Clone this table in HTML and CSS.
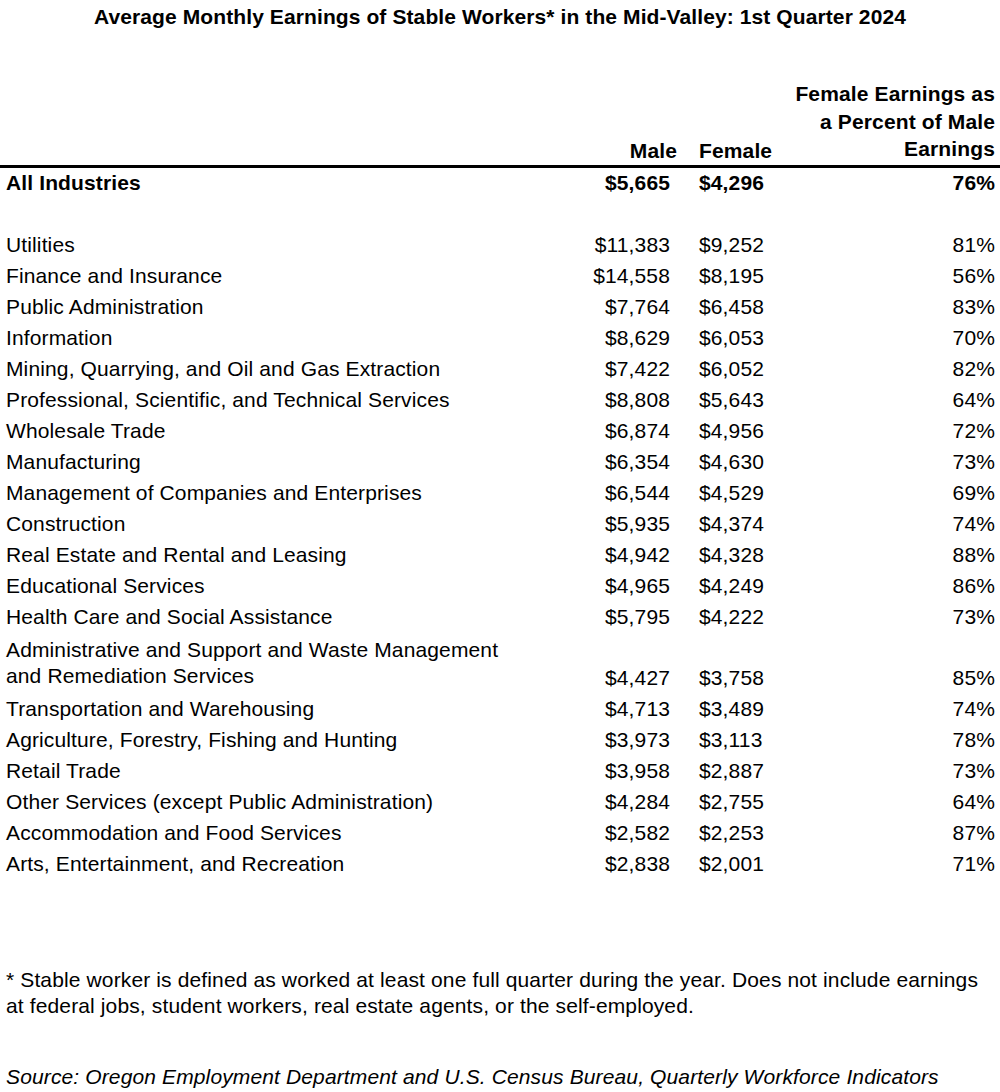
FILE: index.html
```html
<!DOCTYPE html>
<html lang="en">
<head>
<meta charset="utf-8">
<title>Average Monthly Earnings of Stable Workers</title>
<link rel="stylesheet" href="styles.css">
</head>
<body>
<h1 class="title">Average Monthly Earnings of Stable Workers* in the Mid-Valley: 1st Quarter 2024</h1>

<div class="table">
  <div class="row head">
    <div class="cell label"></div>
    <div class="cell male">Male</div>
    <div class="cell female">Female</div>
    <div class="cell pct">Female Earnings as<br>a Percent of Male<br>Earnings</div>
  </div>
  <div class="row total">
    <div class="cell label">All Industries</div>
    <div class="cell male">$5,665</div>
    <div class="cell female">$4,296</div>
    <div class="cell pct">76%</div>
  </div>
  <div class="spacer"></div>
  <div class="row"><div class="cell label">Utilities</div><div class="cell male">$11,383</div><div class="cell female">$9,252</div><div class="cell pct">81%</div></div>
  <div class="row"><div class="cell label">Finance and Insurance</div><div class="cell male">$14,558</div><div class="cell female">$8,195</div><div class="cell pct">56%</div></div>
  <div class="row"><div class="cell label">Public Administration</div><div class="cell male">$7,764</div><div class="cell female">$6,458</div><div class="cell pct">83%</div></div>
  <div class="row"><div class="cell label">Information</div><div class="cell male">$8,629</div><div class="cell female">$6,053</div><div class="cell pct">70%</div></div>
  <div class="row"><div class="cell label">Mining, Quarrying, and Oil and Gas Extraction</div><div class="cell male">$7,422</div><div class="cell female">$6,052</div><div class="cell pct">82%</div></div>
  <div class="row"><div class="cell label">Professional, Scientific, and Technical Services</div><div class="cell male">$8,808</div><div class="cell female">$5,643</div><div class="cell pct">64%</div></div>
  <div class="row"><div class="cell label">Wholesale Trade</div><div class="cell male">$6,874</div><div class="cell female">$4,956</div><div class="cell pct">72%</div></div>
  <div class="row"><div class="cell label">Manufacturing</div><div class="cell male">$6,354</div><div class="cell female">$4,630</div><div class="cell pct">73%</div></div>
  <div class="row"><div class="cell label">Management of Companies and Enterprises</div><div class="cell male">$6,544</div><div class="cell female">$4,529</div><div class="cell pct">69%</div></div>
  <div class="row"><div class="cell label">Construction</div><div class="cell male">$5,935</div><div class="cell female">$4,374</div><div class="cell pct">74%</div></div>
  <div class="row"><div class="cell label">Real Estate and Rental and Leasing</div><div class="cell male">$4,942</div><div class="cell female">$4,328</div><div class="cell pct">88%</div></div>
  <div class="row"><div class="cell label">Educational Services</div><div class="cell male">$4,965</div><div class="cell female">$4,249</div><div class="cell pct">86%</div></div>
  <div class="row"><div class="cell label">Health Care and Social Assistance</div><div class="cell male">$5,795</div><div class="cell female">$4,222</div><div class="cell pct">73%</div></div>
  <div class="row tall"><div class="cell label">Administrative and Support and Waste Management<br>and Remediation Services</div><div class="cell male">$4,427</div><div class="cell female">$3,758</div><div class="cell pct">85%</div></div>
  <div class="row"><div class="cell label">Transportation and Warehousing</div><div class="cell male">$4,713</div><div class="cell female">$3,489</div><div class="cell pct">74%</div></div>
  <div class="row"><div class="cell label">Agriculture, Forestry, Fishing and Hunting</div><div class="cell male">$3,973</div><div class="cell female">$3,113</div><div class="cell pct">78%</div></div>
  <div class="row"><div class="cell label">Retail Trade</div><div class="cell male">$3,958</div><div class="cell female">$2,887</div><div class="cell pct">73%</div></div>
  <div class="row"><div class="cell label">Other Services (except Public Administration)</div><div class="cell male">$4,284</div><div class="cell female">$2,755</div><div class="cell pct">64%</div></div>
  <div class="row"><div class="cell label">Accommodation and Food Services</div><div class="cell male">$2,582</div><div class="cell female">$2,253</div><div class="cell pct">87%</div></div>
  <div class="row"><div class="cell label">Arts, Entertainment, and Recreation</div><div class="cell male">$2,838</div><div class="cell female">$2,001</div><div class="cell pct">71%</div></div>
</div>

<p class="note">* Stable worker is defined as worked at least one full quarter during the year. Does not include earnings at federal jobs, student workers, real estate agents, or the self-employed.</p>
<p class="source">Source: Oregon Employment Department and U.S. Census Bureau, Quarterly Workforce Indicators</p>
</body>
</html>
```

FILE: styles.css
```css
html, body {
  margin: 0;
  padding: 0;
  background: #ffffff;
}

body {
  font-family: "Liberation Sans", Arial, sans-serif;
  font-size: 21px;
  letter-spacing: 0.13px;
  color: #000000;
  width: 1000px;
}

.title {
  margin: 0;
  padding-top: 6px;
  height: 80px;
  box-sizing: border-box;
  font-size: 21px;
  letter-spacing: 0.1px;
  line-height: 22px;
  font-weight: bold;
  text-align: center;
  white-space: nowrap;
}

.table {
  padding: 0 5px 0 6px;
}

.row {
  display: grid;
  grid-template-columns: 1fr 100px 100px 225px;
  align-items: end;
}

.cell {
  line-height: 26px;
  padding: 2.5px 0;
  white-space: nowrap;
}

.male {
  text-align: right;
}

.female {
  padding-left: 29px;
}

.pct {
  text-align: right;
}

.head {
  font-weight: bold;
  border-bottom: 3px solid #000000;
  margin: 0 -5px 0 -6px;
  padding: 0 5px 0 6px;
}

.head .pct {
  line-height: 27.5px;
  padding: 0 0 2px;
}

.head .male,
.head .female {
  padding-bottom: 1px;
}

.head .male {
  margin-right: -7px;
}

.total {
  font-weight: bold;
}

.spacer {
  height: 31px;
}

.tall .label {
  padding: 4.5px 0;
}

.note {
  margin: 87px 0 0;
  padding: 0 14px 0 6px;
  line-height: 26px;
}

.source {
  margin: 45px 0 0;
  padding: 0 6px;
  line-height: 26px;
  font-style: italic;
}
```
